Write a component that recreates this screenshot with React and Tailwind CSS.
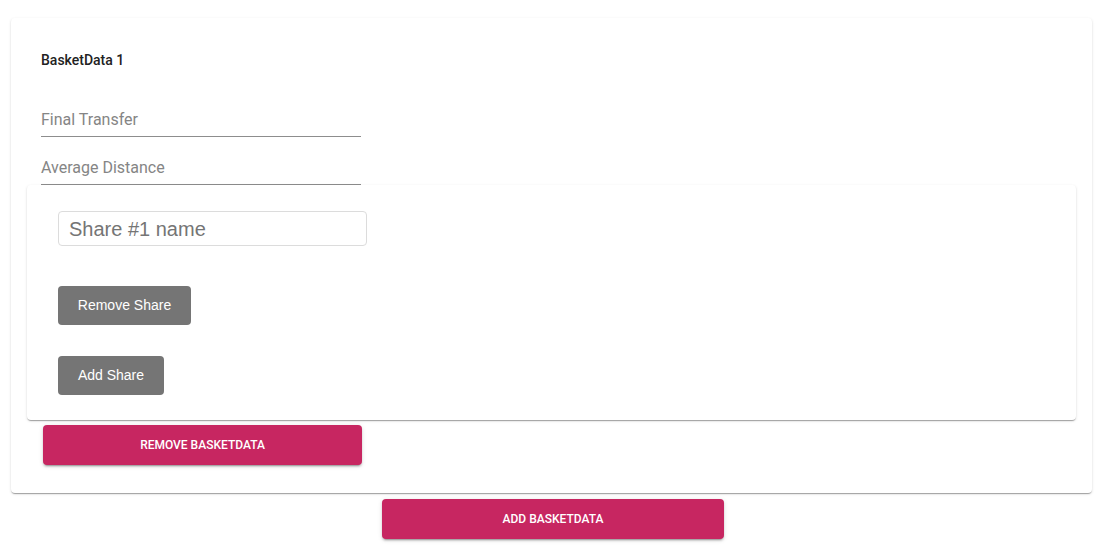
export default function App() {
  return (
    <div className="min-h-[554px] w-[1106px] bg-white pt-[18px]" style={{ fontFamily: "Roboto, 'Liberation Sans', sans-serif" }}>
      <div className="ml-[11px] w-[1081px] rounded bg-white px-4 pb-[28px] shadow-[0_2px_1px_-1px_rgba(0,0,0,0.2),0_1px_1px_0_rgba(0,0,0,0.14),0_1px_3px_0_rgba(0,0,0,0.12)]">
        <div className="px-[14px] pt-[33px]">
          <div className="h-[18px] text-[14px] font-medium leading-[18px] text-[#222]">BasketData 1</div>
          <div className="mt-[41px] w-[320px] border-b border-[#8d8d8d] pb-[6px] text-[16px] leading-[20px] text-[#858585]">Final Transfer</div>
          <div className="mt-[21px] w-[320px] border-b border-[#8d8d8d] pb-[6px] text-[16px] leading-[20px] text-[#858585]">Average Distance</div>
        </div>
        <div className="w-[1049px] rounded bg-white pl-[31px] pt-[26px] pb-[25px] shadow-[0_2px_1px_-1px_rgba(0,0,0,0.2),0_1px_1px_0_rgba(0,0,0,0.14),0_1px_3px_0_rgba(0,0,0,0.12)]" style={{ fontFamily: "'Liberation Sans', Arial, sans-serif" }}>
          <div className="flex h-[35px] w-[309px] items-center rounded border border-[#dcdcdc] px-[10px] text-[20px] text-[#757575]">Share #1 name</div>
          <div className="mt-[40px] flex h-[39px] w-[133px] items-center justify-center rounded bg-[#757575] text-[14px] text-white">Remove Share</div>
          <div className="mt-[31px] flex h-[39px] w-[106px] items-center justify-center rounded bg-[#757575] text-[14px] text-white">Add Share</div>
        </div>
        <div className="ml-4 mt-[5px] flex h-[40px] w-[319px] items-center justify-center rounded bg-[#c72661] text-[12px] font-medium text-white shadow-[0_3px_1px_-2px_rgba(0,0,0,0.2),0_2px_2px_0_rgba(0,0,0,0.14),0_1px_5px_0_rgba(0,0,0,0.12)]">REMOVE BASKETDATA</div>
      </div>
      <div className="mt-[6px] flex justify-center">
        <div className="flex h-[40px] w-[342px] items-center justify-center rounded bg-[#c72661] text-[12px] font-medium text-white shadow-[0_3px_1px_-2px_rgba(0,0,0,0.2),0_2px_2px_0_rgba(0,0,0,0.14),0_1px_5px_0_rgba(0,0,0,0.12)]">ADD BASKETDATA</div>
      </div>
    </div>
  );
}
